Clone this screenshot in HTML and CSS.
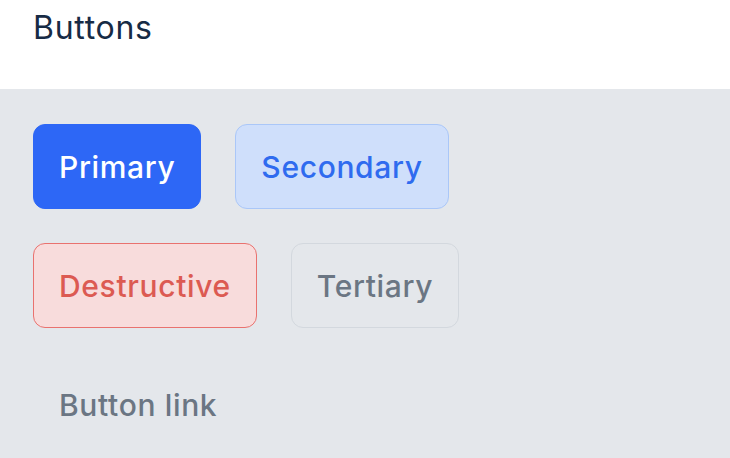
FILE: index.html
```html
<!DOCTYPE html>
<html>
<head>
<meta charset="utf-8">
<link rel="stylesheet" href="styles.css">
</head>
<body>
<header class="top">
  <h1 class="title">Buttons</h1>
</header>
<main class="panel">
  <div class="row">
    <button class="btn btn-primary">Primary</button>
    <button class="btn btn-secondary">Secondary</button>
  </div>
  <div class="row">
    <button class="btn btn-destructive">Destructive</button>
    <button class="btn btn-tertiary">Tertiary</button>
  </div>
  <div class="row">
    <button class="btn btn-link">Button link</button>
  </div>
</main>
</body>
</html>
```
FILE: styles.css
```css
* { box-sizing: border-box; }
html, body { margin: 0; padding: 0; }
body {
  width: 730px;
  height: 458px;
  overflow: hidden;
  font-family: Inter, "Noto Sans", sans-serif;
  background: #e4e7eb;
}
.top {
  background: #ffffff;
  height: 89px;
  padding: 8px 0 0 33px;
}
.title {
  margin: 0;
  font-size: 32px;
  font-weight: 400;
  color: #172b45;
  line-height: 40px;
  letter-spacing: 0.7px;
}
.panel {
  display: flex;
  flex-direction: column;
  gap: 34px;
  padding: 35px 33px 0;
  height: 369px;
}
.row {
  display: flex;
  gap: 34px;
}
.btn {
  height: 85px;
  padding: 0 25px;
  border-radius: 12px;
  border: 1px solid transparent;
  font-family: inherit;
  font-size: 30px;
  font-weight: 500;
  letter-spacing: 0.65px;
  background: transparent;
}
.btn-primary {
  background: #2d67f6;
  color: #ffffff;
  border-color: #2d67f6;
}
.btn-secondary {
  background: #cfdffb;
  border-color: #aac7f8;
  color: #2f6bef;
}
.btn-destructive {
  background: #f8dcdc;
  border-color: #e9726f;
  color: #dc5a52;
}
.btn-tertiary {
  background: #e4e7eb;
  border-color: #d3d8de;
  color: #6b7683;
}
.btn-link {
  color: #6b7683;
}
```
